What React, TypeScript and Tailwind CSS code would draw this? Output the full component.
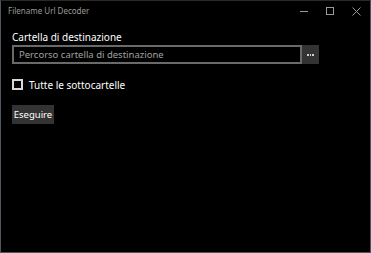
export default function App() {
  return (
    <div
      className="w-[371px] h-[253px] bg-black border border-[#4f5661] border-t-[#2a2a2a] flex flex-col overflow-hidden"
      style={{ fontFamily: '"Noto Sans", "Open Sans", sans-serif' }}
    >
      <div className="h-[20px] flex items-center shrink-0">
        <span className="ml-[7px] text-[8px] text-[#9a9a9a] leading-none">Filename Url Decoder</span>
        <div className="ml-auto flex items-center h-full">
          <div className="w-[26px] h-full flex items-center justify-center">
            <div className="w-[8px] h-px bg-[#9a9a9a]" />
          </div>
          <div className="w-[26px] h-full flex items-center justify-center">
            <div className="w-[8px] h-[8px] border border-[#9a9a9a]" />
          </div>
          <div className="w-[27px] h-full flex items-center justify-center">
            <svg width="9" height="9" viewBox="0 0 9 9">
              <path d="M0.5 0.5 L8.5 8.5 M8.5 0.5 L0.5 8.5" stroke="#9a9a9a" strokeWidth="1" />
            </svg>
          </div>
        </div>
      </div>
      <div className="pl-[11px] pt-[10px] flex flex-col">
        <div className="text-[10px] text-white leading-[12px]">Cartella di destinazione</div>
        <div className="mt-[2px] flex">
          <div className="w-[290px] h-[19px] border-2 border-[#6a6a6a] flex items-center pl-[5px]">
            <span className="text-[9.5px] text-[#a0a0a0] leading-none">Percorso cartella di destinazione</span>
          </div>
          <div className="w-[17px] h-[19px] bg-[#333333] flex items-center justify-center gap-px">
            <div className="w-[1.5px] h-[2px] bg-[#d0d0d0]" />
            <div className="w-[1.5px] h-[2px] bg-[#d0d0d0]" />
            <div className="w-[1.5px] h-[2px] bg-[#d0d0d0]" />
          </div>
        </div>
        <div className="mt-[15px] flex items-center">
          <div className="w-[11px] h-[11px] border-2 border-[#d8d8d8]" />
          <span className="ml-[6px] text-[10px] text-white leading-none">Tutte le sottocartelle</span>
        </div>
        <div className="mt-[15px] flex">
          <div className="flex items-center justify-center w-[42px] h-[19px] bg-[#333333] text-[9.5px] text-white leading-none">
            Eseguire
          </div>
        </div>
      </div>
    </div>
  );
}
